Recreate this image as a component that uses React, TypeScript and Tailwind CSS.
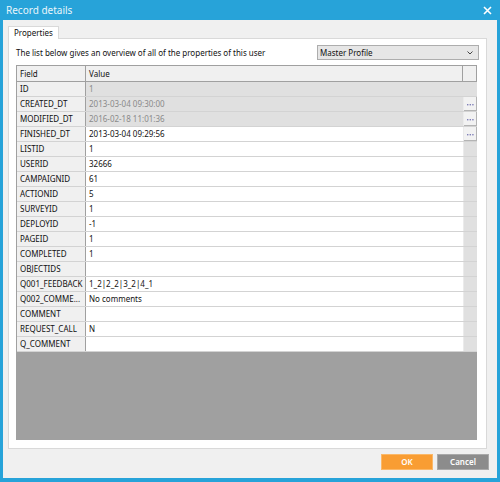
import React from "react";

type Row = { f: string; v: string; ro?: boolean; btn?: boolean };

const rows: Row[] = [
  { f: "ID", v: "1", ro: true },
  { f: "CREATED_DT", v: "2013-03-04 09:30:00", ro: true, btn: true },
  { f: "MODIFIED_DT", v: "2016-02-18 11:01:36", ro: true, btn: true },
  { f: "FINISHED_DT", v: "2013-03-04 09:29:56", btn: true },
  { f: "LISTID", v: "1" },
  { f: "USERID", v: "32666" },
  { f: "CAMPAIGNID", v: "61" },
  { f: "ACTIONID", v: "5" },
  { f: "SURVEYID", v: "1" },
  { f: "DEPLOYID", v: "-1" },
  { f: "PAGEID", v: "1" },
  { f: "COMPLETED", v: "1" },
  { f: "OBJECTIDS", v: "" },
  { f: "Q001_FEEDBACK", v: "1_2|2_2|3_2|4_1" },
  { f: "Q002_COMME...", v: "No comments" },
  { f: "COMMENT", v: "" },
  { f: "REQUEST_CALL", v: "N" },
  { f: "Q_COMMENT", v: "" },
];

export default function App() {
  return (
    <div
      className="w-[500px] h-[482px] bg-[#27a3d9] flex flex-col overflow-hidden"
      style={{ fontFamily: '"Noto Sans", "Open Sans", sans-serif' }}
    >
      <div className="h-[20px] flex items-center justify-between pl-[6px] pr-[8px] text-white text-[10px]">
        <span className="opacity-90">Record details</span>
        <svg width="9" height="9" viewBox="0 0 9 9">
          <path d="M1 1 L8 8 M8 1 L1 8" stroke="white" strokeWidth="1.6" />
        </svg>
      </div>
      <div className="flex-1 mx-[3px] mb-[4px] bg-[#f0f0f0] flex flex-col pl-[5px] pr-[10px] pt-[6px] text-[8px] text-[#111111]">
        <div className="flex">
          <div className="h-[13px] px-[5px] border border-b-0 border-[#d9d9d9] bg-white flex items-center mb-[-1px] relative z-10">
            Properties
          </div>
        </div>
        <div className="h-[411px] border border-[#d9d9d9] bg-white flex flex-col pl-[7px] pr-[9px] pt-[6px]">
          <div className="flex items-center justify-between h-[15px] mr-[-2px]">
            <span>The list below gives an overview of all of the properties of this user</span>
            <div className="w-[162px] h-[15px] border border-[#adadad] bg-[#e6e6e6] flex items-center justify-between pl-[2px] pr-[5px]">
              <span>Master Profile</span>
              <svg width="6" height="4" viewBox="0 0 6 4">
                <path d="M0.5 0.5 L3 3 L5.5 0.5" stroke="#444" strokeWidth="1" fill="none" />
              </svg>
            </div>
          </div>
          <div className="mt-[5px] h-[375px] flex flex-col bg-[#a0a0a0] border-t border-l border-[#a0a0a0]">
            <div className="flex h-[16px] border-b border-[#a0a0a0] bg-[#f0f0f0]">
              <div className="w-[69px] border-r border-[#a0a0a0] pl-[3px] flex items-center">Field</div>
              <div className="flex-1 border-r border-[#a0a0a0] pl-[3px] flex items-center">Value</div>
              <div className="w-[14px] border-r border-[#a0a0a0]" />
            </div>
            {rows.map((r) => (
              <div key={r.f} className="flex h-[15px] border-b border-[#d3d3d3]">
                <div className="w-[69px] bg-[#f0f0f0] border-r border-[#a0a0a0] pl-[3px] flex items-center whitespace-nowrap overflow-hidden">
                  {r.f}
                </div>
                <div
                  className={
                    r.ro
                      ? "flex-1 bg-[#e0e0e0] pl-[3px] flex items-center text-[#8a8a8a]"
                      : "flex-1 bg-white pl-[3px] flex items-center"
                  }
                >
                  {r.v}
                </div>
                <div className={r.ro && !r.btn ? "w-[14px] bg-[#e0e0e0] flex" : "w-[14px] bg-[#e0e0e0] border-l border-[#ebebeb] flex"}>
                  {r.btn ? (
                    <div className="w-[13px] h-[14px] bg-[#f2f2f2] border-r border-b border-[#b4b4b4] flex items-end justify-center pb-[4px]">
                      <svg width="7" height="2" viewBox="0 0 7 2">
                        <rect x="0" y="0" width="1.4" height="1.4" fill="#8080b8" />
                        <rect x="2.6" y="0" width="1.4" height="1.4" fill="#8080b8" />
                        <rect x="5.2" y="0" width="1.4" height="1.4" fill="#8080b8" />
                      </svg>
                    </div>
                  ) : null}
                </div>
              </div>
            ))}
          </div>
        </div>
        <div className="flex justify-end gap-[4px] mt-[5px]">
          <div className="w-[52px] h-[16px] bg-[#f99d33] border border-[#fbb868] text-white font-semibold flex items-center justify-center">
            OK
          </div>
          <div className="w-[52px] h-[16px] bg-[#8c8c8c] border border-[#a9a9a9] text-white font-semibold flex items-center justify-center mr-[-2px]">
            Cancel
          </div>
        </div>
      </div>
    </div>
  );
}
